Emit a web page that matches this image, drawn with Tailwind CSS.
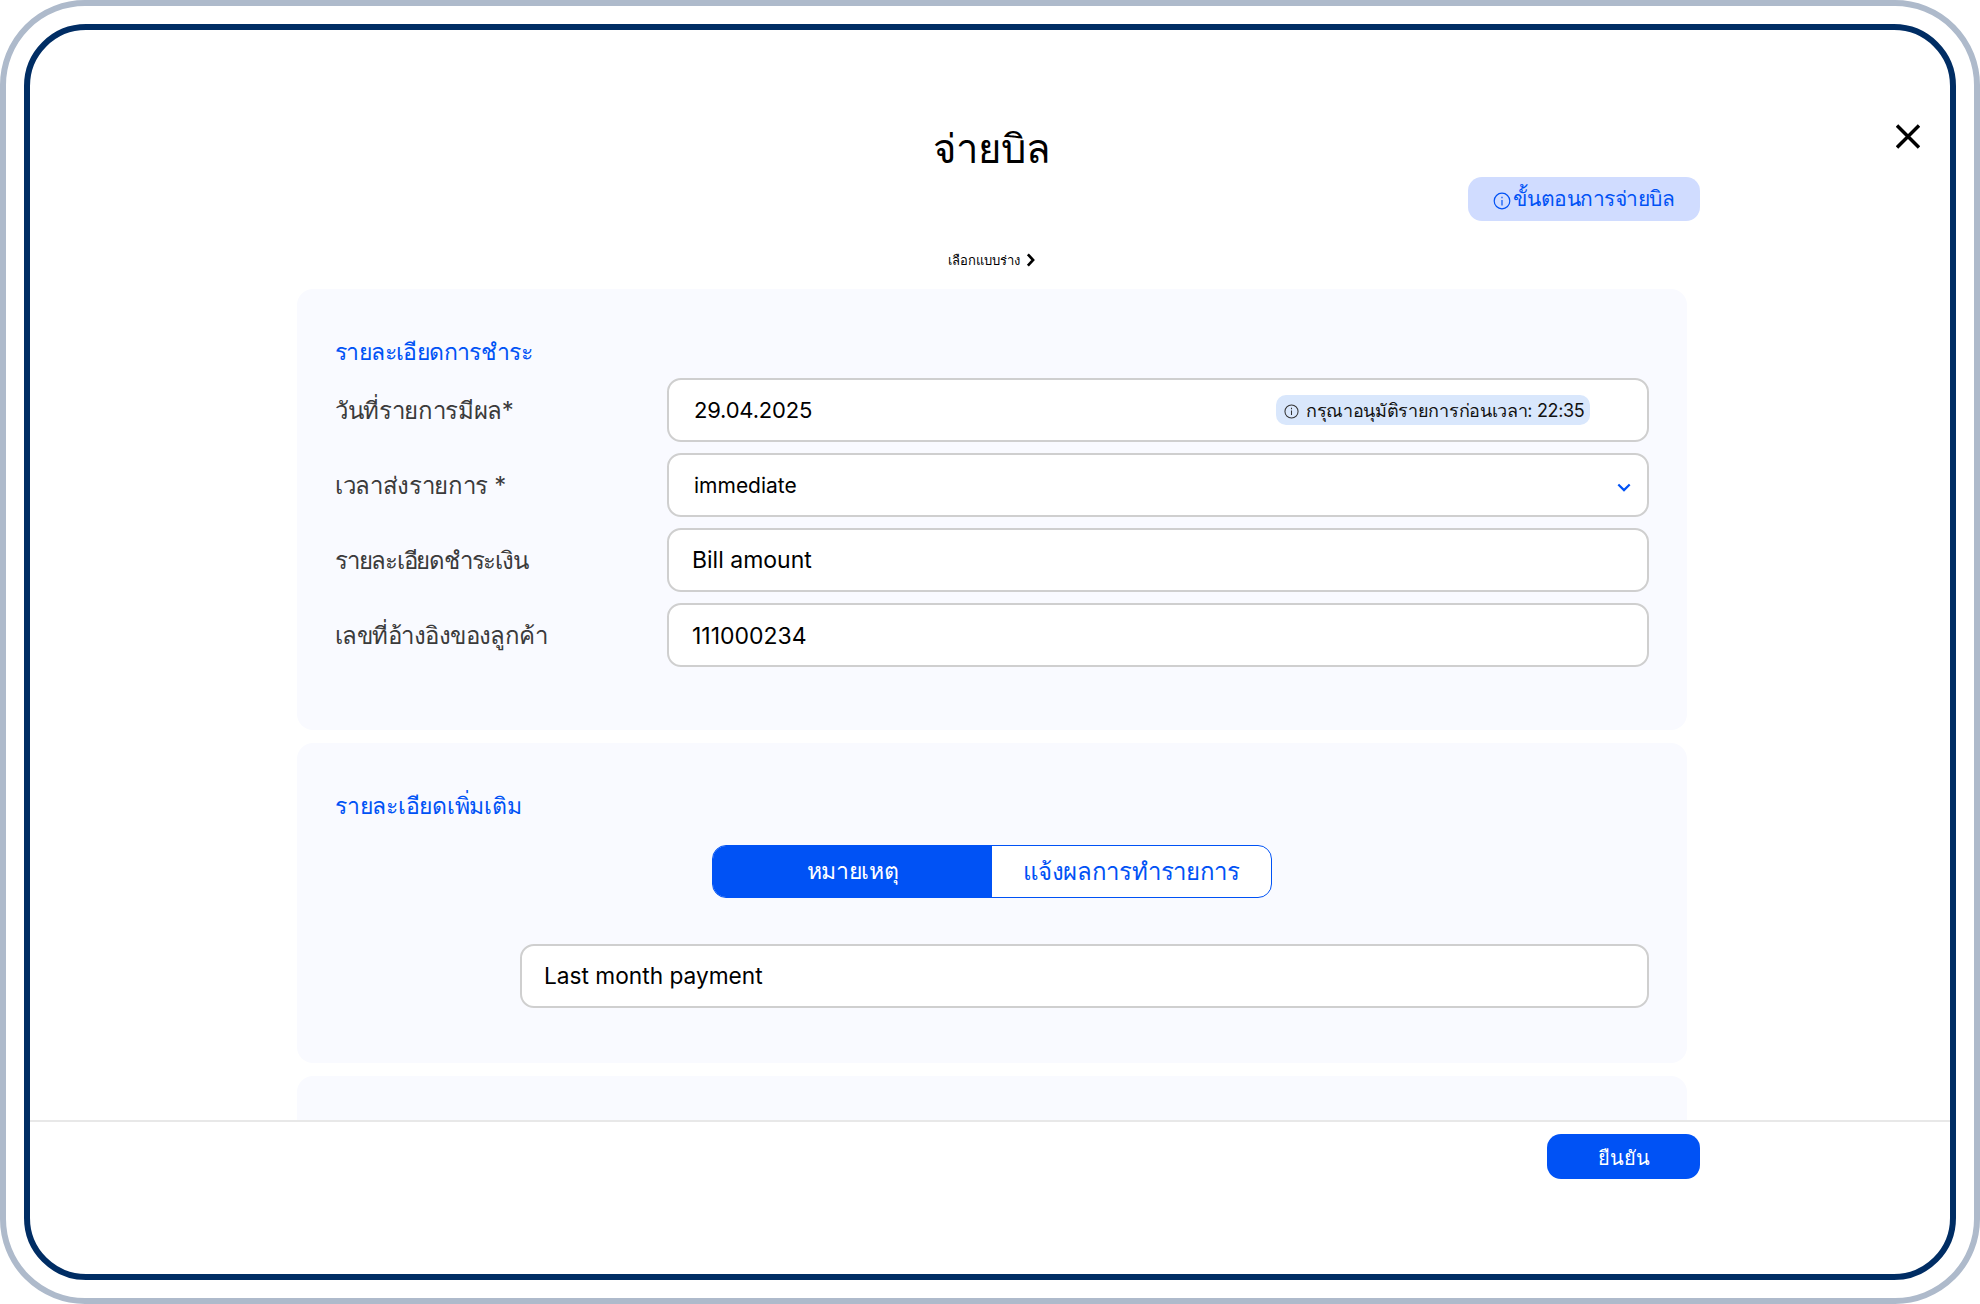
<!DOCTYPE html>
<html lang="th">
<head>
  <meta charset="UTF-8" />
  <title>จ่ายบิล</title>
  <script src="https://cdn.jsdelivr.net/npm/@tailwindcss/browser@4"></script>
</head>
<body class="bg-white font-['Inter','Noto_Sans','DejaVu_Sans',sans-serif] text-black">
  <!-- Device frame -->
  <div class="w-[1980px] h-[1304px] border-[6px] border-[#aebacb] rounded-[85px] p-[18px]">
    <div class="relative h-[1256px] border-[6px] border-[#002d64] rounded-[62px] overflow-hidden flex flex-col">

      <!-- Scrolling area -->
      <div class="h-[1090px] overflow-hidden relative">
        <h1 class="absolute left-[1px] w-[1922px] top-[94px] text-center text-[40px] leading-[50px]">จ่ายบิล</h1>

        <button class="absolute right-[30px] top-[94px] w-[24px] h-[25px]">
          <svg viewBox="0 0 24 25" class="w-[24px] h-[25px]" fill="none" stroke="#000" stroke-width="3.500"><path d="M1 1.500 23 23.500M23 1.500 1 23.500"/></svg>
        </button>

        <button class="absolute left-[1438px] top-[147px] w-[232px] h-[44px] rounded-[14px] bg-[#d0dcff] text-[#0052f5] text-[21px] tracking-[-0.45px] flex items-center justify-center gap-[2px]">
          <svg viewBox="0 0 18 18" class="w-[18px] h-[18px] mt-[3px]" fill="none" stroke="#0052f5" stroke-width="1.200"><circle cx="9" cy="9" r="7.800"/><path d="M9 8v5.500M9 4.800v1.500"/></svg>
          <span>ขั้นตอนการจ่ายบิล</span>
        </button>

        <div class="absolute left-0 w-[1922px] top-[219px] flex items-center justify-center gap-[6px] text-[13px] leading-[22px] font-medium">
          <span>เลือกแบบร่าง</span>
          <svg viewBox="0 0 10 16" class="w-[9px] h-[14px]" fill="none" stroke="#000" stroke-width="3"><path d="M2 1.500 8 8l-6 6.500"/></svg>
        </div>

        <div class="pt-[259px] pl-[267px] flex flex-col gap-[13px]">
          <!-- Payment details -->
          <section class="w-[1390px] h-[441px] rounded-[16px] bg-[#f9faff] pt-[46px] px-[38px]">
            <h2 class="text-[23px] tracking-[-0.6px] leading-[34px] text-[#0052f5]">รายละเอียดการชำระ</h2>
            <div class="mt-[9px] flex flex-col gap-[11px]">
              <div class="flex items-center">
                <label class="w-[332px] pt-[2px] text-[24px] tracking-[-0.35px] text-[#3b3b3b]">วันที่รายการมีผล*</label>
                <div class="w-[982px] h-[64px] rounded-[14px] border-2 border-[#cfcfcf] bg-white flex items-center pl-[25px] text-[22px] tracking-[-0.2px]">
                  <span>29.04.2025</span>
                  <span class="ml-auto mr-[57px] h-[30px] w-[314px] rounded-[10px] bg-[#d9e7fc] flex items-center gap-[7px] pl-[8px] text-[18px] tracking-[-0.32px] text-[#111] whitespace-nowrap">
                    <svg viewBox="0 0 16 16" class="w-[15px] h-[15px] mt-[2px] shrink-0" fill="none" stroke="#333" stroke-width="1.100"><circle cx="8" cy="8" r="7"/><path d="M8 7v4.800M8 4v1.500"/></svg>
                    <span>กรุณาอนุมัติรายการก่อนเวลา: 22:35</span>
                  </span>
                </div>
              </div>
              <div class="flex items-center">
                <label class="w-[332px] pt-[2px] text-[24px] tracking-[-0.35px] text-[#3b3b3b]">เวลาส่งรายการ *</label>
                <div class="w-[982px] h-[64px] rounded-[14px] border-2 border-[#cfcfcf] bg-white flex items-center pl-[25px] pt-[2px] text-[21px]">
                  <span>immediate</span>
                  <svg viewBox="0 0 16 10" class="ml-auto mr-[16px] w-[14px] h-[9px] mt-[2px]" fill="none" stroke="#0052f5" stroke-width="2.500"><path d="M1.500 1.500 8 8l6.500-6.500"/></svg>
                </div>
              </div>
              <div class="flex items-center">
                <label class="w-[332px] pt-[2px] text-[24px] tracking-[-1.250px] text-[#3b3b3b]">รายละเอียดชำระเงิน</label>
                <div class="w-[982px] h-[64px] rounded-[14px] border-2 border-[#cfcfcf] bg-white flex items-center pl-[23px] text-[23px]">Bill amount</div>
              </div>
              <div class="flex items-center">
                <label class="w-[332px] pt-[2px] text-[24px] tracking-[-0.55px] text-[#3b3b3b]">เลขที่อ้างอิงของลูกค้า</label>
                <div class="w-[982px] h-[64px] rounded-[14px] border-2 border-[#cfcfcf] bg-white flex items-center pl-[23px] pt-[2px] text-[23px]">111000234</div>
              </div>
            </div>
          </section>

          <!-- Additional details -->
          <section class="w-[1390px] h-[320px] rounded-[16px] bg-[#f9faff] pt-[46px] px-[38px]">
            <h2 class="text-[23px] tracking-[-0.25px] leading-[34px] text-[#0052f5]">รายละเอียดเพิ่มเติม</h2>
            <div class="mt-[22px] ml-[377px] w-[560px] h-[53px] rounded-[14px] border-[1.500px] border-[#0052f5] bg-white overflow-hidden flex">
              <div class="w-[279px] bg-[#0052f5] text-white text-[23px] tracking-[-0.3px] flex items-center justify-center">หมายเหตุ</div>
              <div class="flex-1 text-[#0052f5] text-[24px] tracking-[-0.3px] flex items-center justify-center">แจ้งผลการทำรายการ</div>
            </div>
            <div class="mt-[46px] ml-[185px] w-[1129px] h-[64px] rounded-[14px] border-2 border-[#cfcfcf] bg-white flex items-center pl-[22px] text-[22.700px]">Last month payment</div>
          </section>

          <section class="w-[1390px] h-[60px] rounded-[16px] bg-[#f9faff]"></section>
        </div>
      </div>

      <!-- Footer -->
      <div class="border-t-2 border-[#e8e8e8] flex justify-end pt-[12px] pr-[250px]">
        <button class="w-[153px] h-[45px] pt-[2px] rounded-[14px] bg-[#0052f5] text-white text-[20px]">ยืนยัน</button>
      </div>
    </div>
  </div>
</body>
</html>
